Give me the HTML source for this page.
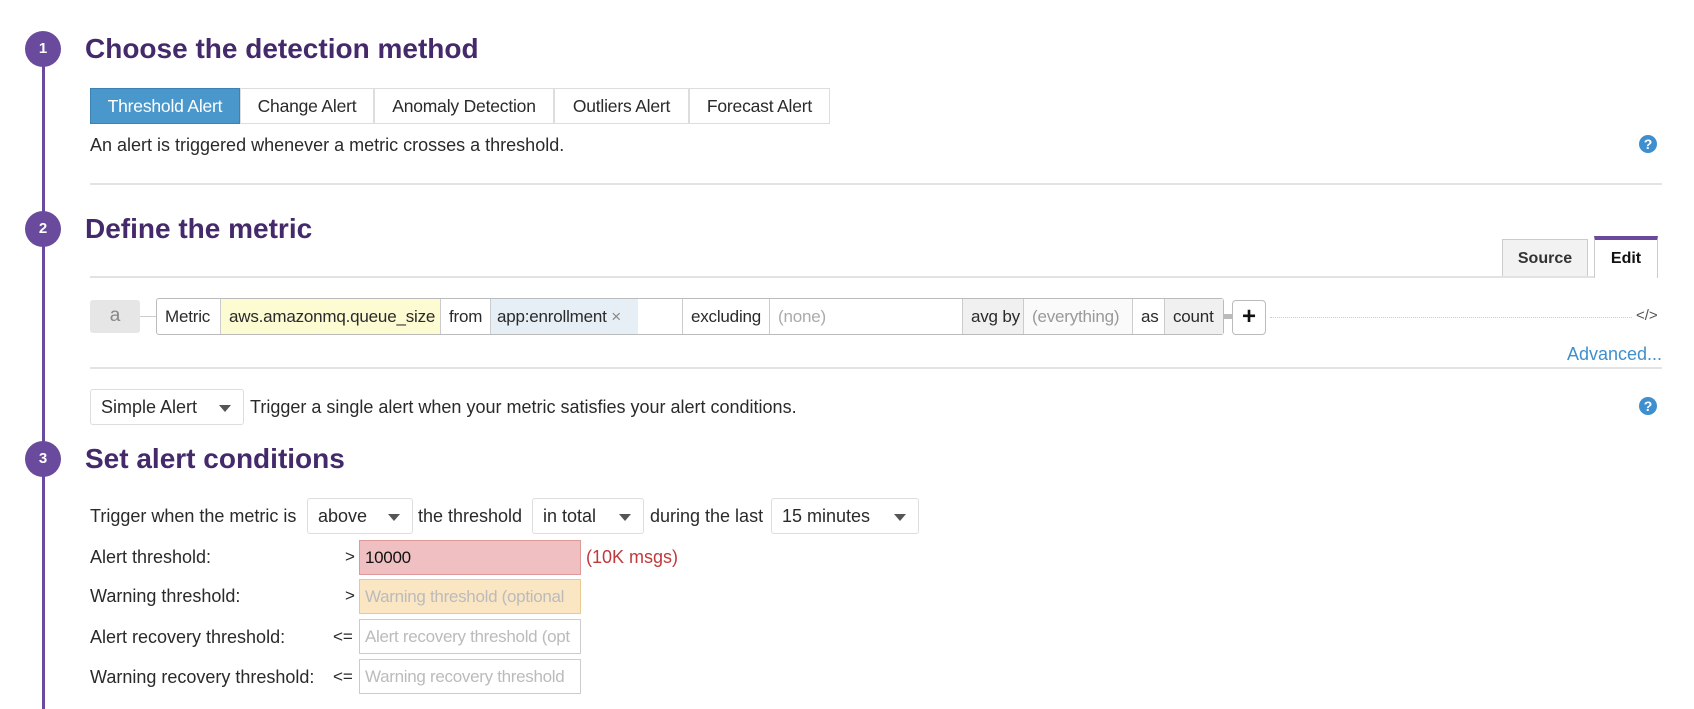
<!DOCTYPE html>
<html><head><meta charset="utf-8"><style>
*{box-sizing:border-box;margin:0;padding:0}
body{width:1694px;height:704px;background:#fff;font-family:"Liberation Sans",sans-serif;color:#2a2a2a;position:relative;overflow:hidden;font-size:18px}
.a{position:absolute;white-space:nowrap}
.vl{left:42px;top:49px;width:3px;height:660px;background:#6a4a9c}
.circ{width:36px;height:36px;border-radius:50%;background:#6a4a9c;color:#fff;font-weight:bold;font-size:15px;text-align:center;line-height:36px;left:25px}
h2{position:absolute;left:85px;font-size:28px;font-weight:bold;color:#44296b;line-height:32px;white-space:nowrap}
.btn{position:absolute;top:88px;height:36px;border:1px solid #ddd;line-height:34px;text-align:center;font-size:17.5px;background:#fff;white-space:nowrap;letter-spacing:-0.2px}
.hr{height:2px;background:#e2e2e2;left:90px;width:1572px}
.help{width:18px;height:18px;border-radius:50%;background:#3f8fce;color:#fff;font-weight:bold;font-size:14px;text-align:center;line-height:18px;left:1639px}
.seg{position:absolute;top:0;height:35px;line-height:35px;font-size:17px;padding-left:8px;white-space:nowrap;border-right:1px solid #ccc;overflow:hidden;letter-spacing:-0.2px}
.sel{position:absolute;height:36px;border:1px solid #ddd;border-radius:3px;line-height:34px;padding-left:10px;font-size:18px;background:#fff;white-space:nowrap}
.sel:after{content:"";position:absolute;right:12px;top:15px;border-left:6px solid transparent;border-right:6px solid transparent;border-top:7px solid #555}
.lbl{position:absolute;left:90px;font-size:18px;line-height:20px;white-space:nowrap}
.inp{position:absolute;left:359px;width:222px;height:35px;border:1px solid #ccc;line-height:33px;padding-left:5px;font-size:17px;color:#bbb;white-space:nowrap;overflow:hidden;letter-spacing:-0.3px}
.op{position:absolute;font-size:17px;line-height:20px}
</style></head><body>
<div class="a vl"></div>
<div class="a circ" style="top:31px">1</div>
<div class="a circ" style="top:211px">2</div>
<div class="a circ" style="top:441px">3</div>

<h2 style="top:33px">Choose the detection method</h2>
<div class="btn" style="left:90px;width:150px;background:#4a97cb;color:#fff;border-color:#3b83b5">Threshold Alert</div>
<div class="btn" style="left:240px;width:134px">Change Alert</div>
<div class="btn" style="left:374px;width:180px">Anomaly Detection</div>
<div class="btn" style="left:554px;width:135px">Outliers Alert</div>
<div class="btn" style="left:689px;width:141px">Forecast Alert</div>
<div class="a" style="left:90px;top:135px;line-height:20px">An alert is triggered whenever a metric crosses a threshold.</div>
<div class="a help" style="top:135px">?</div>
<div class="a hr" style="top:183px"></div>

<h2 style="top:213px">Define the metric</h2>
<div class="a" style="left:1502px;top:239px;width:86px;height:38px;background:#f2f2f2;border:1px solid #ccc;border-bottom:none;text-align:center;line-height:38px;font-weight:bold;font-size:16px;color:#333">Source</div>
<div class="a" style="left:1594px;top:236px;width:64px;height:42px;background:#fff;border:1px solid #ccc;border-top:4px solid #6a4a9c;border-bottom:none;text-align:center;line-height:38px;font-weight:bold;font-size:16px;color:#111">Edit</div>
<div class="a hr" style="top:276px;width:1504px"></div>

<div class="a" style="left:90px;top:300px;width:50px;height:33px;background:#e6e6e6;border-radius:3px;text-align:center;line-height:31px;color:#888;font-size:19px">a</div>
<div class="a" style="left:140px;top:316px;width:16px;height:1px;background:#ccc"></div>
<div class="a" style="left:156px;top:298px;width:1068px;height:37px;border:1px solid #bbb;border-radius:3px">
 <div class="seg" style="left:0;width:64px">Metric</div>
 <div class="seg" style="left:64px;width:220px;background:#fdfbd2">aws.amazonmq.queue_size</div>
 <div class="seg" style="left:284px;width:50px">from</div>
 <div class="seg" style="left:334px;width:192px;background:#fff;padding-left:0"><span style="background:#e6eef6;display:inline-block;padding-left:6px;width:147px">app:enrollment <span style="color:#888">×</span></span></div>
 <div class="seg" style="left:526px;width:87px">excluding</div>
 <div class="seg" style="left:613px;width:193px;color:#aaa">(none)</div>
 <div class="seg" style="left:806px;width:61px;background:#f0f0f0">avg by</div>
 <div class="seg" style="left:867px;width:109px;color:#999;background:#fafafa">(everything)</div>
 <div class="seg" style="left:976px;width:32px">as</div>
 <div class="seg" style="left:1008px;width:58px;background:#f0f0f0;border-right:none">count</div>
</div>
<div class="a" style="left:1224px;top:314px;width:8px;height:5px;background:#bbb"></div>
<div class="a" style="left:1232px;top:300px;width:34px;height:35px;border:1px solid #bbb;border-radius:4px;text-align:center;line-height:32px;font-size:24px;font-weight:bold;color:#111">+</div>
<div class="a" style="left:1270px;top:317px;width:362px;border-top:1px dotted #ccc"></div>
<div class="a" style="left:1636px;top:307px;font-size:15px;color:#555">&lt;/&gt;</div>
<div class="a" style="right:32px;top:344px;color:#3f8fce;font-size:18px;line-height:20px">Advanced...</div>
<div class="a hr" style="top:367px"></div>

<div class="sel" style="left:90px;top:389px;width:154px">Simple Alert</div>
<div class="a" style="left:250px;top:397px;line-height:20px">Trigger a single alert when your metric satisfies your alert conditions.</div>
<div class="a help" style="top:397px">?</div>

<h2 style="top:443px">Set alert conditions</h2>
<div class="lbl" style="top:506px">Trigger when the metric is</div>
<div class="sel" style="left:307px;top:498px;width:106px">above</div>
<div class="a" style="left:418px;top:506px;line-height:20px">the threshold</div>
<div class="sel" style="left:532px;top:498px;width:112px">in total</div>
<div class="a" style="left:650px;top:506px;line-height:20px">during the last</div>
<div class="sel" style="left:771px;top:498px;width:148px">15 minutes</div>

<div class="lbl" style="top:547px">Alert threshold:</div>
<div class="op" style="left:345px;top:547px">&gt;</div>
<div class="inp" style="top:540px;background:#f0bfc2;border-color:#d99;color:#111">10000</div>
<div class="a" style="left:586px;top:547px;color:#c0393b;line-height:20px">(10K msgs)</div>

<div class="lbl" style="top:586px">Warning threshold:</div>
<div class="op" style="left:345px;top:586px">&gt;</div>
<div class="inp" style="top:579px;background:#fbe6c4;border-color:#e8c98f">Warning threshold (optional</div>

<div class="lbl" style="top:627px">Alert recovery threshold:</div>
<div class="op" style="left:333px;top:627px">&lt;=</div>
<div class="inp" style="top:619px">Alert recovery threshold (opt</div>

<div class="lbl" style="top:667px">Warning recovery threshold:</div>
<div class="op" style="left:333px;top:667px">&lt;=</div>
<div class="inp" style="top:659px">Warning recovery threshold</div>
</body></html>
